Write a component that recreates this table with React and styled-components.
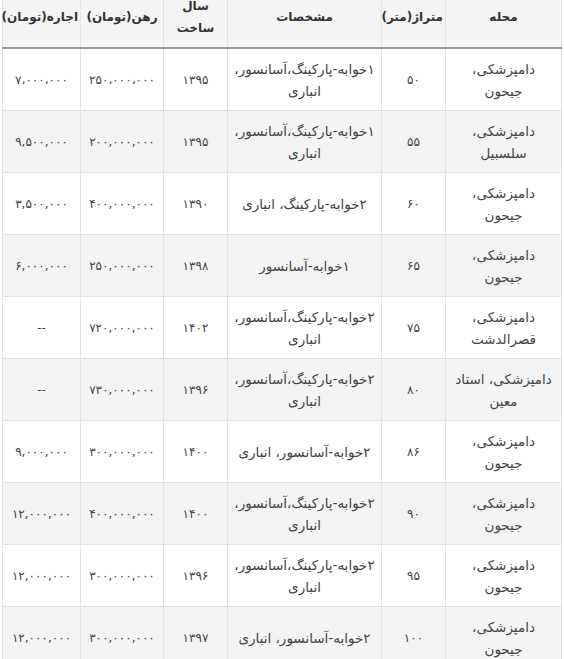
import React from "react";
import styled, { createGlobalStyle } from "styled-components";

const GlobalStyle = createGlobalStyle`
  html, body {
    margin: 0;
    padding: 0;
    background: #ffffff;
  }
  body {
    font-family: "DejaVu Sans", "Noto Sans", sans-serif;
    overflow: hidden;
  }
`;

const Wrapper = styled.div`
  width: 564px;
  height: 659px;
  overflow: hidden;
  background: #fff;
`;

const Table = styled.table`
  direction: rtl;
  width: 559px;
  margin: -14px 0 0 2px;
  border-collapse: collapse;
  table-layout: fixed;
  border: 1px solid #e3e3e3;
  color: #444;
`;

const Th = styled.th`
  height: 60px;
  padding: 0 2px;
  background: #f5f5f5;
  border-left: 1px solid #e3e3e3;
  border-bottom: 2px solid #9a9a9a;
  font-size: 12px;
  font-weight: bold;
  line-height: 22px;
  color: #333;
  text-align: center;
  vertical-align: middle;
  white-space: ${(props) => (props.$wrap ? "normal" : "nowrap")};
  letter-spacing: -0.2px;
`;

const Row = styled.tr`
  background: ${(props) => (props.$alt ? "#f4f4f4" : "#ffffff")};
`;

const Td = styled.td`
  height: 61px;
  padding: 0 6px;
  border-left: 1px solid #e3e3e3;
  border-bottom: 1px solid #e3e3e3;
  font-size: ${(props) => (props.$num ? "12px" : "13.5px")};
  line-height: 22px;
  text-align: center;
  vertical-align: middle;
`;

const rows = [
  ["دامپزشکی، جیحون", "۵۰", "۱خوابه-پارکینگ،آسانسور، انباری", "۱۳۹۵", "۲۵۰،۰۰۰،۰۰۰", "۷،۰۰۰،۰۰۰"],
  ["دامپزشکی، سلسبیل", "۵۵", "۱خوابه-پارکینگ،آسانسور، انباری", "۱۳۹۵", "۲۰۰,۰۰۰,۰۰۰", "۹,۵۰۰,۰۰۰"],
  ["دامپزشکی، جیحون", "۶۰", "۲خوابه-پارکینگ، انباری", "۱۳۹۰", "۴۰۰,۰۰۰,۰۰۰", "۳,۵۰۰,۰۰۰"],
  ["دامپزشکی، جیحون", "۶۵", "۱خوابه-آسانسور", "۱۳۹۸", "۲۵۰,۰۰۰,۰۰۰", "۶,۰۰۰,۰۰۰"],
  ["دامپزشکی، قصرالدشت", "۷۵", "۲خوابه-پارکینگ،آسانسور، انباری", "۱۴۰۲", "۷۲۰,۰۰۰,۰۰۰", "--"],
  ["دامپزشکی، استاد معین", "۸۰", "۲خوابه-پارکینگ،آسانسور، انباری", "۱۳۹۶", "۷۳۰,۰۰۰,۰۰۰", "--"],
  ["دامپزشکی، جیحون", "۸۶", "۲خوابه-آسانسور، انباری", "۱۴۰۰", "۳۰۰,۰۰۰,۰۰۰", "۹,۰۰۰,۰۰۰"],
  ["دامپزشکی، جیحون", "۹۰", "۲خوابه-پارکینگ،آسانسور، انباری", "۱۴۰۰", "۴۰۰,۰۰۰,۰۰۰", "۱۲,۰۰۰,۰۰۰"],
  ["دامپزشکی، جیحون", "۹۵", "۲خوابه-پارکینگ،آسانسور، انباری", "۱۳۹۶", "۳۰۰,۰۰۰,۰۰۰", "۱۲,۰۰۰,۰۰۰"],
  ["دامپزشکی، جیحون", "۱۰۰", "۲خوابه-آسانسور، انباری", "۱۳۹۷", "۳۰۰,۰۰۰,۰۰۰", "۱۲,۰۰۰,۰۰۰"],
];

const headers = ["محله", "متراژ(متر)", "مشخصات", "سال ساخت", "رهن(تومان)", "اجاره(تومان)"];
const widths = [116, 64, 154, 64, 83, 78];

function App() {
  return (
    <Wrapper>
      <GlobalStyle />
      <Table>
        <colgroup>
          {widths.map((w, i) => (
            <col key={i} style={{ width: w }} />
          ))}
        </colgroup>
        <thead>
          <tr>
            {headers.map((h, i) => (
              <Th key={i} $wrap={i === 3}>
                {h}
              </Th>
            ))}
          </tr>
        </thead>
        <tbody>
          {rows.map((row, index) => (
            <Row key={index} $alt={index % 2 === 1}>
              {row.map((cell, i) => (
                <Td key={i} $num={i === 1 || i >= 3}>
                  {cell}
                </Td>
              ))}
            </Row>
          ))}
        </tbody>
      </Table>
    </Wrapper>
  );
}

export default App;
